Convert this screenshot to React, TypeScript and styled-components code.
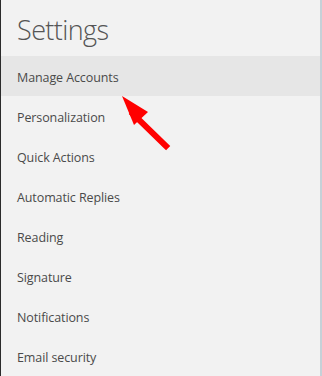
import React from 'react';
import styled, { createGlobalStyle } from 'styled-components';

const GlobalStyle = createGlobalStyle`
  html, body {
    margin: 0;
    padding: 0;
    background: #f2f2f2;
  }
  body {
    font-family: "Open Sans", "Noto Sans", "Liberation Sans", sans-serif;
  }
`;

const Window = styled.div`
  width: 322px;
  height: 376px;
  display: flex;
  overflow: hidden;
`;

const Pane = styled.div`
  position: relative;
  flex: 1;
  background: #f2f2f2;
  border-left: 1px solid #2b2b2b;
  display: flex;
  flex-direction: column;
`;

const Edge = styled.div`
  width: 2px;
  background: #c6d1d8;
`;

const Title = styled.h1`
  margin: 0;
  height: 58px;
  padding: 12px 0 0 16px;
  box-sizing: border-box;
  font-size: 27px;
  font-weight: 300;
  line-height: 36px;
  color: #555;
  letter-spacing: -0.6px;
`;

const List = styled.ul`
  list-style: none;
  margin: 0;
  padding: 0;
`;

const Item = styled.li<{ active?: boolean }>`
  height: 40px;
  box-sizing: border-box;
  display: flex;
  align-items: center;
  padding: 2px 0 0 16px;
  font-size: 12.5px;
  letter-spacing: -0.1px;
  color: #4a4a4a;
  background: ${({ active }) => (active ? '#e6e6e6' : 'transparent')};
`;

const Pointer = styled.svg`
  position: absolute;
  left: 110px;
  top: 90px;
  width: 64px;
  height: 64px;
`;

const items = [
  'Manage Accounts',
  'Personalization',
  'Quick Actions',
  'Automatic Replies',
  'Reading',
  'Signature',
  'Notifications',
  'Email security',
];

export default function App() {
  return (
    <>
      <GlobalStyle />
      <Window>
        <Pane>
          <Title>Settings</Title>
          <List>
            {items.map((label, i) => (
              <Item key={label} active={i === 0}>
                {label}
              </Item>
            ))}
          </List>
          {/* red annotation arrow */}
          <Pointer viewBox="0 0 64 64">
            <line x1="55" y1="56" x2="22" y2="24" stroke="#f00" strokeWidth="6" strokeLinecap="square" />
            <polygon points="11,6 37,22 23,35" fill="#f00" />
          </Pointer>
        </Pane>
        <Edge />
      </Window>
    </>
  );
}
